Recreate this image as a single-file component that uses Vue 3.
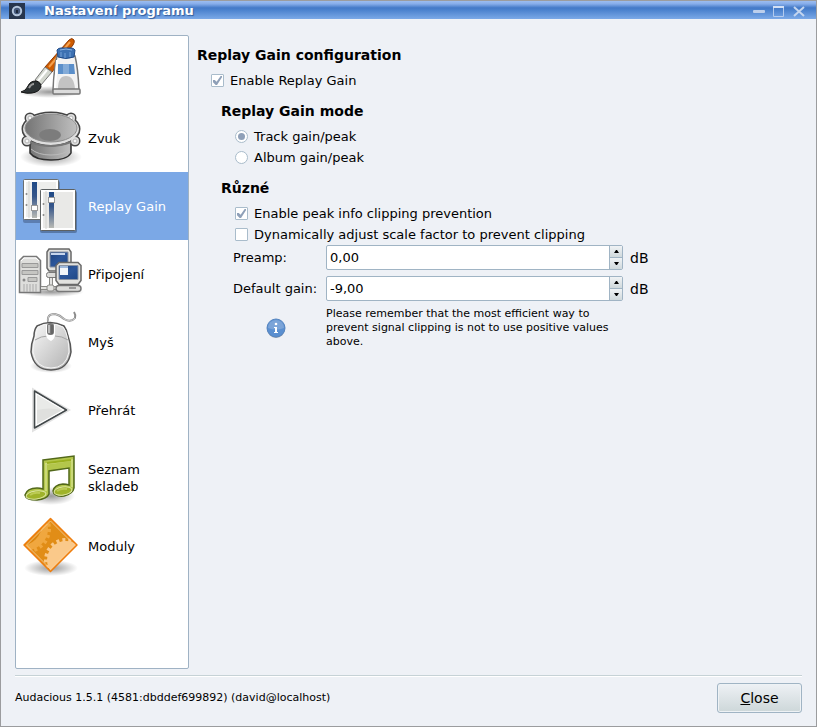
<template>
  <div class="window">
    <svg class="shared-defs" aria-hidden="true">
      <defs>
        <radialGradient id="shade">
          <stop offset="0" stop-color="#000" stop-opacity="0.4" />
          <stop offset="1" stop-color="#000" stop-opacity="0" />
        </radialGradient>
        <linearGradient id="metal" x2="1" y2="1">
          <stop offset="0" stop-color="#fafafa" />
          <stop offset="1" stop-color="#b0b0b0" />
        </linearGradient>
        <linearGradient id="cone" x2="1" y2="0">
          <stop offset="0" stop-color="#747474" />
          <stop offset="1" stop-color="#c0c0c0" />
        </linearGradient>
        <linearGradient id="track" x2="0" y2="1">
          <stop offset="0" stop-color="#204a87" />
          <stop offset="0.4" stop-color="#36568a" />
          <stop offset="1" stop-color="#b9bab4" />
        </linearGradient>
        <linearGradient id="screen" x2="1" y2="1">
          <stop offset="0" stop-color="#1d427c" />
          <stop offset="0.5" stop-color="#2c569a" />
          <stop offset="1" stop-color="#1f4888" />
        </linearGradient>
        <clipPath id="diamond">
          <path d="M34.500 7l26 26-26 26-26-26z" />
        </clipPath>
      </defs>
    </svg>

    <header class="titlebar">
      <svg class="app-icon" viewBox="0 0 16 16" aria-hidden="true">
        <rect width="16" height="16" fill="#27364d" />
        <circle cx="8" cy="8" r="4.200" fill="#44587a" stroke="#b4c6dc" stroke-width="2" />
        <path d="M7 7h2v3h-2z" fill="#1c283a" />
      </svg>
      <h1>{{ title }}</h1>
      <div class="window-buttons">
        <button type="button" aria-label="Minimize">
          <svg viewBox="0 0 14 14"><rect x="1" y="6" width="12" height="3" rx="1" fill="#bccfec" /></svg>
        </button>
        <button type="button" aria-label="Maximize">
          <svg viewBox="0 0 14 14">
            <path d="M1.500 3v9.500h10v-9.500" fill="none" stroke="#b4cbee" />
            <path d="M1 3h11" stroke="#d3e0f5" stroke-width="2" />
          </svg>
        </button>
        <button type="button" aria-label="Close window">
          <svg viewBox="0 0 14 14"><path d="M2 3l10 9M12 3l-10 9" stroke="#c3d5ef" stroke-width="2" /></svg>
        </button>
      </div>
    </header>

    <div class="body">
      <nav class="categories">
        <button
          v-for="item in categories"
          :key="item.id"
          type="button"
          class="category"
          :class="{ selected: item.id === current }"
          @click="current = item.id"
        >
          <svg class="category-icon" viewBox="0 0 72 68" aria-hidden="true">
            <g v-if="item.id === 'look'">
              <ellipse cx="34" cy="56" rx="32" ry="6" fill="url(#shade)" />
              <path d="M29 31L53 4q3-3 5 0q1 2-1 5L36 36z" fill="#ce5c00" stroke="#8f3902" />
              <path d="M33 31L54 6" stroke="#f5a04c" stroke-width="2" />
              <path d="M19 44l10-13 7 5-11 13z" fill="#d3d7cf" stroke="#777" />
              <path d="M22 45l9-11" stroke="#fff" stroke-width="2" />
              <path d="M5 56q5-1 7-6q2-5 8-5q5 1 5 6q-2 5-9 6q-5 1-11-1z" fill="#2e3436" stroke="#111" />
              <path d="M13 52q2-4 5-4" fill="none" stroke="#999" stroke-width="2" />
              <path d="M41 20h18q3 12 4 34h-26q1-22 4-34z" fill="#f3f3f3" stroke="#777" stroke-width="1.500" />
              <path d="M42 28h16l1 10h-17z" fill="#5b8fca" />
              <path d="M47 28h6v10h-6z" fill="#83abd8" />
              <path d="M42 53q0-13 8-13t9 13z" fill="#c3c3c3" />
              <path d="M41 24l-2 29" stroke="#fff" stroke-width="2" />
              <path d="M41 14q1-2 4-2h10q3 0 4 2l-1 7q-8 3-16 0z" fill="#3d71b2" stroke="#204a87" />
              <path d="M44 14q6-2 12 0" fill="none" stroke="#8db4e2" />
              <path d="M45 16v5M49 17v5M54 16v5" stroke="#77a3d8" />
              <rect x="37" y="53" width="27" height="5" rx="1" fill="#dcdcdc" stroke="#777" stroke-width="1.500" />
            </g>

            <g v-else-if="item.id === 'sound'">
              <ellipse cx="35" cy="53" rx="31" ry="10" fill="url(#shade)" />
              <path d="M14 38v11q5 7 21 7t20-7v-11z" fill="url(#cone)" stroke="#2e2e2e" stroke-width="1.500" />
              <path d="M15 45q7 6 20 6t19-6" fill="none" stroke="#bbb" />
              <g fill="#dedede" stroke="#454545" stroke-width="3">
                <circle cx="14" cy="14" r="4" />
                <circle cx="55" cy="14" r="4" />
                <circle cx="11" cy="37" r="4" />
                <circle cx="59" cy="37" r="4" />
                <ellipse cx="35" cy="25" rx="28" ry="16" />
              </g>
              <g fill="#dedede">
                <circle cx="14" cy="14" r="4" />
                <circle cx="55" cy="14" r="4" />
                <circle cx="11" cy="37" r="4" />
                <circle cx="59" cy="37" r="4" />
                <ellipse cx="35" cy="25" rx="28" ry="16" />
              </g>
              <g fill="#f7f7f7" stroke="#b5b5b5">
                <circle cx="14" cy="14" r="2" />
                <circle cx="55" cy="14" r="2" />
                <circle cx="11" cy="37" r="2" />
                <circle cx="59" cy="37" r="2" />
              </g>
              <ellipse cx="35" cy="24" rx="26" ry="14" fill="url(#cone)" stroke="#8c8c8c" />
              <ellipse cx="34" cy="31" rx="11" ry="6" fill="#7c7c7c" />
              <path d="M14 38q20 8 41 0" fill="none" stroke="#777" stroke-width="2" />
            </g>

            <g v-else-if="item.id === 'gain'">
              <rect x="7" y="9" width="37" height="42" rx="2" fill="#23324e" opacity="0.350" />
              <rect x="7.500" y="7.500" width="35" height="40" rx="1" fill="#eeeeec" stroke="#6b6f70" />
              <rect x="9" y="9" width="32" height="37" fill="none" stroke="#fff" stroke-width="2" />
              <path d="M13 9v37" stroke="#d3d3cf" />
              <circle cx="10.500" cy="22" r="1" fill="#888" />
              <circle cx="10.500" cy="33" r="1" fill="#888" />
              <rect x="16" y="10" width="5" height="36" fill="url(#track)" />
              <rect x="15.500" y="33.500" width="6" height="5" fill="#fff" stroke="#999" />
              <rect x="24" y="19" width="37" height="42" rx="2" fill="#23324e" opacity="0.400" />
              <rect x="24.500" y="17.500" width="35" height="41" rx="1" fill="#e9e9e7" stroke="#5d6162" />
              <rect x="26" y="19" width="32" height="38" fill="none" stroke="#fff" stroke-width="2" />
              <path d="M30 19v38" stroke="#d3d3cf" />
              <circle cx="27.500" cy="32" r="1" fill="#888" />
              <circle cx="27.500" cy="43" r="1" fill="#888" />
              <rect x="33" y="20" width="5" height="36" fill="url(#track)" />
              <rect x="32.500" y="25.500" width="6" height="5" fill="#fff" stroke="#999" />
            </g>

            <g v-else-if="item.id === 'connection'">
              <ellipse cx="35" cy="52" rx="33" ry="5" fill="url(#shade)" />
              <path d="M3.500 20.500l4-4h13l4 4v32h-21z" fill="#dededc" stroke="#777" stroke-width="1.500" />
              <path d="M5 21l3-3h12l3 3" fill="none" stroke="#fff" />
              <path d="M6 23.500h16v4h-16zM6 30.500h16v4h-16zM12 37.500h9v4h-9z" fill="#c5c5c2" stroke="#999" />
              <circle cx="8" cy="40" r="1.500" fill="#888" />
              <path d="M8 44v8M11 44v8M14 44v8M17 44v8M20 44v8" stroke="#aaa" />
              <path d="M25 48h15M35 36v13" stroke="#8b8b88" stroke-width="4" />
              <path d="M25 48h15M35 36v13" stroke="#e2e2e0" stroke-width="2" />
              <rect x="31" y="45" width="7" height="6" rx="2" fill="#e2e2e0" stroke="#8b8b88" />
              <rect x="30.500" y="32.500" width="25" height="5" rx="2" fill="#dcdcda" stroke="#777" />
              <path d="M33 9h20l2 3v16l-2 3h-20l-2-3v-16z" fill="#e2e2df" stroke="#686868" stroke-width="1.500" />
              <path d="M34 12h18v15h-18z" fill="url(#screen)" stroke="#8a93a3" />
              <path d="M35 13h14v2h-14z" fill="#c6d5ec" />
              <rect x="40" y="45.500" width="25" height="6" rx="3" fill="#dcdcda" stroke="#777" stroke-width="1.500" />
              <path d="M53 48h7" stroke="#999" stroke-width="2" />
              <path d="M43 22.500h19l3 3v15l-3 4h-19l-3-4v-15z" fill="#e2e2df" stroke="#686868" stroke-width="1.500" />
              <path d="M43 25.500h19v14h-19z" fill="url(#screen)" stroke="#8a93a3" />
              <path d="M44 27h8v8h-8z" fill="#f2f5fa" />
              <path d="M44 26h8v2h-8z" fill="#9db8dc" />
            </g>

            <g v-else-if="item.id === 'mouse'">
              <ellipse cx="35" cy="58" rx="21" ry="7" fill="url(#shade)" />
              <path d="M33 17q-4-11 6-11q5 1 9 5q7 4 11-1q1-3-1-6" fill="none" stroke="#8b8b8b" stroke-width="2" />
              <path d="M33 16q-4-10 6-10q5 1 9 5q7 4 11-1" fill="none" stroke="#dedede" stroke-width="0.800" />
              <path
                d="M21 18q13-7 27 0q3 4 4 10q3 8 3 16q-3 18-20 18t-20-18q0-8 3-16q0-6 3-10z"
                fill="url(#metal)" stroke="#555" stroke-width="1.500"
              />
              <path d="M22 19q12-6 25 0q3 4 4 9q2 8 2 16q-3 16-18 16t-18-16q0-8 3-16q0-5 2-9z" fill="none" stroke="#f4f4f4" />
              <path d="M19 32q6-4 13-4M52 32q-6-4-13-4" fill="none" stroke="#a4a4a4" />
              <path d="M30 17h9v9q0 5-4 7q-5-2-5-7z" fill="#fff" />
              <rect x="31" y="15" width="7" height="12" rx="3" fill="#777" />
              <path d="M33 17v8" stroke="#bbb" stroke-width="2" />
              <path d="M36 17v9" stroke="#555" />
            </g>

            <g v-else-if="item.id === 'playback'">
              <path d="M18 15l33 19-33 19z" fill="none" stroke="#e2e2e2" stroke-width="4" />
              <path d="M18.500 15l32 19-32 18z" fill="#eee" stroke="#42484a" stroke-width="1.500" stroke-linejoin="round" />
              <path d="M20.500 18l27 16-27 15z" fill="#e9eae8" stroke="#fff" />
              <path d="M21 34q12-3 25 0l-25 14z" fill="#dfe0de" />
            </g>

            <g v-else-if="item.id === 'playlist'">
              <ellipse cx="35" cy="52" rx="24" ry="9" fill="url(#shade)" />
              <path
                d="M27 16l31-4v32q-1 6-10 8q-10 1-11-5q1-6 10-7q3 0 6 1v-17l-20 3v23q-2 5-12 6q-11 0-12-5q2-7 12-7q3 0 6 1z"
                fill="#b3c64b" stroke="#52681a" stroke-width="1.500"
              />
              <path d="M29 20l28-4M30 20v27M56 16v27" fill="none" stroke="#d3df88" stroke-width="1.500" />
              <path d="M31 19l24-3" stroke="#9bb01f" stroke-width="2" />
              <ellipse cx="20" cy="51" rx="10" ry="4" fill="#9fb32a" stroke="#dce5a3" transform="rotate(-8 20 51)" />
              <ellipse cx="47" cy="47" rx="9" ry="4" fill="#9fb32a" stroke="#dce5a3" transform="rotate(-8 47 47)" />
              <path d="M14 51q4-3 10-2M41 47q4-3 10-2" fill="none" stroke="#bccb55" stroke-width="2" />
            </g>

            <g v-else>
              <ellipse cx="35" cy="56" rx="27" ry="8" fill="url(#shade)" />
              <g clip-path="url(#diamond)">
                <rect x="8" y="6" width="54" height="54" fill="#e18d17" />
                <circle cx="11" cy="17" r="21" fill="#f0a73f" />
                <circle cx="11" cy="17" r="22" fill="none" stroke="#f0a73f" stroke-width="4" stroke-dasharray="3 3" />
                <circle cx="4" cy="12" r="22" fill="#dd8710" />
                <circle cx="50" cy="48" r="19" fill="#fac98a" />
                <circle cx="50" cy="48" r="20" fill="none" stroke="#fac98a" stroke-width="4" stroke-dasharray="3 3" />
              </g>
              <path d="M34.500 9l24 24-24 24-24-24z" fill="none" stroke="#fbd09a" stroke-opacity="0.800" />
              <path d="M34.500 6.500l26.500 26.500-26.500 26.500-26.500-26.500z" fill="none" stroke="#ef7d0c" stroke-width="1.500" stroke-linejoin="round" />
            </g>
          </svg>
          <span>{{ item.label }}</span>
        </button>
      </nav>

      <main class="settings">
        <h2>Replay Gain configuration</h2>
        <label class="option enable">
          <input v-model="settings.enabled" type="checkbox" />
          <span>Enable Replay Gain</span>
        </label>

        <div class="group">
          <h2>Replay Gain mode</h2>
          <div class="options">
            <label v-for="mode in modes" :key="mode.value" class="option">
              <input v-model="settings.mode" type="radio" name="mode" :value="mode.value" />
              <span>{{ mode.label }}</span>
            </label>
          </div>

          <h2>Různé</h2>
          <div class="options">
            <label class="option">
              <input v-model="settings.clipping" type="checkbox" />
              <span>Enable peak info clipping prevention</span>
            </label>
            <label class="option">
              <input v-model="settings.dynamic" type="checkbox" />
              <span>Dynamically adjust scale factor to prevent clipping</span>
            </label>
          </div>

          <div class="fields">
            <template v-for="field in fields" :key="field.id">
              <label :for="field.id">{{ field.label }}</label>
              <div class="spin">
                <input :id="field.id" type="text" :value="format(field.value)" @change="setValue(field, $event)" />
                <div class="steppers">
                  <button type="button" :aria-label="field.label + ' up'" @click="field.value += 0.1">
                    <svg viewBox="0 0 5 3"><path d="M0 3h5l-2-3h-1z" /></svg>
                  </button>
                  <button type="button" :aria-label="field.label + ' down'" @click="field.value -= 0.1">
                    <svg viewBox="0 0 5 3"><path d="M0 0h5l-2 3h-1z" /></svg>
                  </button>
                </div>
              </div>
              <span class="unit">dB</span>
            </template>

            <svg class="info" viewBox="0 0 20 20" aria-hidden="true">
              <circle cx="10" cy="11" r="9" fill="#9aa3b0" />
              <circle cx="10" cy="10" r="9" fill="#5a8fd0" stroke="#5585c0" />
              <path d="M2 10a8 8 0 0 1 16 0q-8 3-16 0z" fill="#7ba4d8" />
              <circle cx="10" cy="6" r="1.300" fill="#fff" />
              <path d="M8 9h3v5h1v1h-4v-1h1v-4h-1z" fill="#fff" />
            </svg>
            <p class="note">
              Please remember that the most efficient way to prevent signal clipping is not to use positive values above.
            </p>
          </div>
        </div>
      </main>
    </div>

    <footer class="footer">
      <span>Audacious 1.5.1 (4581:dbddef699892) (david@localhost)</span>
      <button type="button" class="close"><u>C</u>lose</button>
    </footer>
  </div>
</template>

<script setup>
import { reactive, ref } from "vue";

const title = "Nastavení programu";
const current = ref("gain");

const categories = [
  { id: "look", label: "Vzhled" },
  { id: "sound", label: "Zvuk" },
  { id: "gain", label: "Replay Gain" },
  { id: "connection", label: "Připojení" },
  { id: "mouse", label: "Myš" },
  { id: "playback", label: "Přehrát" },
  { id: "playlist", label: "Seznam\nskladeb" },
  { id: "plugins", label: "Moduly" },
];

const modes = [
  { value: "track", label: "Track gain/peak" },
  { value: "album", label: "Album gain/peak" },
];

const settings = reactive({
  enabled: true,
  mode: "track",
  clipping: true,
  dynamic: false,
});

const fields = reactive([
  { id: "preamp", label: "Preamp:", value: 0 },
  { id: "default-gain", label: "Default gain:", value: -9 },
]);

// Czech decimal comma
function format(value) {
  return value.toFixed(2).replace(".", ",");
}

function setValue(field, event) {
  const value = parseFloat(event.target.value.replace(",", "."));
  if (!isNaN(value)) {
    field.value = value;
  }
}
</script>

<style>
body {
  margin: 0;
  background: #eef1f6;
}
</style>

<style scoped>
.window {
  box-sizing: border-box;
  min-height: 100vh;
  display: flex;
  flex-direction: column;
  border: 1px solid #9b9c9e;
  background: #eef1f6;
  color: #000;
  font-family: "DejaVu Sans", sans-serif;
  font-size: 13px;
  line-height: 18px;
}
.shared-defs {
  display: block;
  width: 0;
  height: 0;
}
button,
input {
  margin: 0;
  padding: 0;
  font: inherit;
  color: inherit;
}
.titlebar {
  display: flex;
  align-items: center;
  height: 18px;
  padding: 0 10px 0 8px;
  background: linear-gradient(#9cbdf0, #86adea 16%, #4379c7 38%, #4b82ce 50%, #7ba9e7);
}
.app-icon {
  width: 16px;
  height: 16px;
  padding-top: 2px;
}
.titlebar h1 {
  flex: 1;
  margin: 0 0 0 19px;
  padding-top: 2px;
  color: #fff;
  font-size: 13px;
  line-height: 16px;
  text-shadow: 1px 1px 1px #2f5c9c;
}
.window-buttons {
  display: flex;
  gap: 6px;
  padding-top: 2px;
}
.window-buttons button {
  width: 14px;
  height: 14px;
  border: 0;
  background: none;
}
.window-buttons svg {
  display: block;
}
.body {
  flex: 1;
  display: flex;
  align-items: stretch;
  gap: 8px;
  margin: 16px 14px 6px;
}
.categories {
  box-sizing: border-box;
  flex: none;
  width: 174px;
  border: 1px solid #9fb2c4;
  border-radius: 2px;
  background: #fff;
}
.category {
  display: flex;
  align-items: center;
  width: 100%;
  height: 68px;
  border: 0;
  background: none;
  text-align: left;
  line-height: 17px;
  white-space: pre-line;
}
.category.selected {
  background: #7ba8e6;
  color: #fff;
}
.category-icon {
  flex: none;
  width: 72px;
  height: 68px;
}
.settings {
  flex: 1;
  min-width: 0;
  padding-top: 11px;
}
h2 {
  margin: 0 0 6px;
  font-size: 14px;
  line-height: 18px;
}
.group {
  padding-left: 24px;
}
.group h2 {
  margin-top: 11px;
}
.options {
  padding-left: 14px;
}
.enable {
  margin-left: 14px;
}
.option {
  display: flex;
  align-items: center;
  gap: 6px;
  height: 21px;
}
.option input {
  appearance: none;
  box-sizing: border-box;
  flex: none;
  width: 13px;
  height: 13px;
  border: 1px solid #a9bccb;
  border-radius: 1px;
  background: #fff;
}
.option input[type="radio"] {
  border-radius: 50%;
}
.option input:checked::after {
  content: "";
  display: block;
  width: 9px;
  height: 9px;
  margin: 1px;
  background: #8fa0b8;
  clip-path: polygon(0 45%, 20% 45%, 40% 65%, 85% 0, 100% 0, 100% 15%, 45% 100%, 30% 100%, 0 70%);
}
.option input[type="radio"]:checked::after {
  width: 7px;
  height: 7px;
  margin: 2px;
  border-radius: 50%;
  clip-path: none;
}
.fields {
  display: grid;
  grid-template-columns: 86px minmax(0, 297px) auto;
  justify-content: start;
  align-items: center;
  column-gap: 7px;
  row-gap: 6px;
  padding-left: 12px;
}
.fields label {
  white-space: nowrap;
}
.unit {
  font-size: 14px;
}
.spin {
  box-sizing: border-box;
  display: flex;
  height: 25px;
  border: 1px solid #a0b4c4;
  border-radius: 2px;
  background: #fff;
}
.spin input {
  flex: 1;
  min-width: 0;
  padding-left: 3px;
  border: 0;
  background: none;
  outline: none;
}
.steppers {
  display: flex;
  flex-direction: column;
  width: 12px;
  border-left: 1px solid #a0b4c4;
}
.steppers button {
  flex: 1;
  display: flex;
  align-items: center;
  justify-content: center;
  border: 0;
  background: linear-gradient(#f0f3f5, #d0d9dc);
}
.steppers button + button {
  border-top: 1px solid #a0b4c4;
}
.steppers svg {
  width: 5px;
  height: 3px;
}
.info {
  width: 20px;
  height: 20px;
  justify-self: center;
}
.note {
  grid-column: 2 / 4;
  max-width: 300px;
  margin: 0;
  font-size: 11px;
  line-height: 14px;
}
.footer {
  display: flex;
  align-items: center;
  justify-content: space-between;
  margin: 0 14px;
  padding: 7px 0 13px;
  border-top: 1px solid #c6d2d6;
  box-shadow: inset 0 1px #fff;
  font-size: 11px;
}
.close {
  width: 85px;
  height: 30px;
  border: 1px solid #a0b4c4;
  border-radius: 3px;
  background: linear-gradient(#eef1f5, #cdd7d9);
  box-shadow: inset 0 0 0 1px #eef2f5;
  font-size: 14px;
}
</style>
